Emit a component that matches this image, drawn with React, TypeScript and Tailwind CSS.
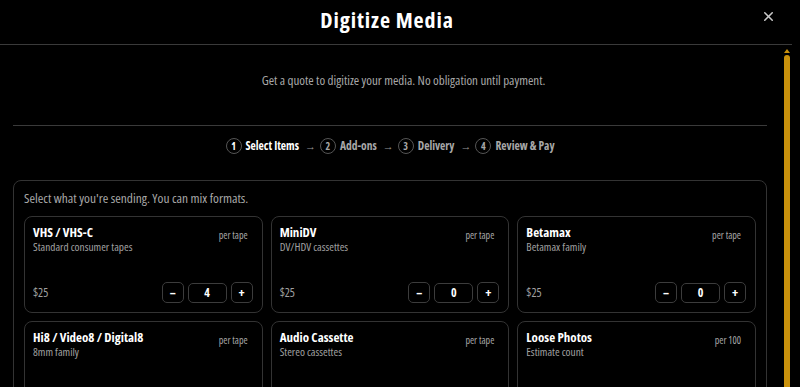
import React, { useState } from 'react';
import { X } from 'lucide-react';

interface MediaItem {
  id: string;
  name: string;
  desc: string;
  unit: string;
  price: number;
}

const ITEMS: MediaItem[] = [
  { id: 'vhs', name: 'VHS / VHS-C', desc: 'Standard consumer tapes', unit: 'per tape', price: 25 },
  { id: 'minidv', name: 'MiniDV', desc: 'DV/HDV cassettes', unit: 'per tape', price: 25 },
  { id: 'betamax', name: 'Betamax', desc: 'Betamax family', unit: 'per tape', price: 25 },
  { id: 'hi8', name: 'Hi8 / Video8 / Digital8', desc: '8mm family', unit: 'per tape', price: 25 },
  { id: 'audio', name: 'Audio Cassette', desc: 'Stereo cassettes', unit: 'per tape', price: 15 },
  { id: 'photos', name: 'Loose Photos', desc: 'Estimate count', unit: 'per 100', price: 30 },
];

const STEPS = ['Select Items', 'Add-ons', 'Delivery', 'Review & Pay'];

const App: React.FC = () => {
  const [qty, setQty] = useState<Record<string, number>>({ vhs: 4 });

  const change = (id: string, d: number) =>
    setQty(q => ({ ...q, [id]: Math.max(0, (q[id] || 0) + d) }));

  return (
    <div className="h-[387px] w-[800px] overflow-hidden bg-black font-['Open_Sans','Liberation_Sans',sans-serif] text-white [font-stretch:75%]">
      <div className="flex h-full w-[792px] flex-col">
        <header className="relative flex h-[45px] shrink-0 items-center justify-center border-b border-[#3a3a3a] pb-[6px] pr-[18px]">
          <h1 className="text-[22px] font-bold leading-[28px] tracking-[0.9px] text-white [font-stretch:87.5%]">
            Digitize Media
          </h1>
          <button className="absolute right-[16px] top-[9px] text-[#c8c8c8]">
            <X size={15} strokeWidth={2.5} />
          </button>
        </header>

        <div className="flex min-h-0 flex-1">
          <div className="min-w-0 flex-1 overflow-hidden">
            <div className="px-[13px] pb-[20px]">
              <p className="pl-[27px] pt-[26px] text-center text-[13px] leading-[18px] text-[#a8a8a8]">
                Get a quote to digitize your media. No obligation until payment.
              </p>
              <div className="mt-[36px] border-t border-[#3a3a3a]" />

              <div className="mt-[12px] flex items-center justify-center gap-[6px] text-[11.5px] font-bold leading-[16px]">
                {STEPS.map((s, i) => (
                  <React.Fragment key={s}>
                    {i > 0 && (
                      <span className="w-[9px] text-center text-[11px] font-normal text-[#9a9a9a]">→</span>
                    )}
                    <span className="flex items-center gap-[4px]">
                      <span
                        className={`flex h-[16px] w-[16px] items-center justify-center rounded-full border border-[#555] text-[10px] ${
                          i === 0 ? 'text-white' : 'text-[#a8a8a8]'
                        }`}
                      >
                        {i + 1}
                      </span>
                      <span className={i === 0 ? 'text-white' : 'text-[#a8a8a8]'}>{s}</span>
                    </span>
                  </React.Fragment>
                ))}
              </div>

              <section className="mt-[26px] rounded-[8px] border border-[#333] px-[10px] pb-[10px] pt-[9px]">
                <p className="mb-[10px] text-[13.4px] leading-[16px] text-[#a8a8a8]">
                  Select what you're sending. You can mix formats.
                </p>
                <div className="grid grid-cols-3 gap-[8px]">
                  {ITEMS.map(item => (
                    <div
                      key={item.id}
                      className="flex h-[97px] flex-col justify-between rounded-[8px] border border-[#333] px-[8px] pb-[9px] pt-[8px]"
                    >
                      <div className="flex items-start justify-between">
                        <div>
                          <div className="text-[13px] font-bold leading-[15px] text-white">{item.name}</div>
                          <div className="text-[11.3px] leading-[14px] text-[#a0a0a0]">{item.desc}</div>
                        </div>
                        <span className="mr-[6px] mt-[4px] text-[10px] leading-[12px] text-[#a8a8a8]">{item.unit}</span>
                      </div>
                      <div className="flex items-center justify-between">
                        <span className="text-[12px] text-[#a0a0a0]">${item.price}</span>
                        <div className="mr-[1px] flex items-center gap-[4px]">
                          <button
                            onClick={() => change(item.id, -1)}
                            className="flex h-[21px] w-[22px] items-center justify-center rounded-[5px] border border-[#3c3c3c] text-[12px] font-bold text-white"
                          >
                            –
                          </button>
                          <input
                            readOnly
                            value={qty[item.id] || 0}
                            className="h-[20px] w-[39px] rounded-[5px] border border-[#3c3c3c] bg-black text-center text-[12px] font-bold text-white outline-none"
                          />
                          <button
                            onClick={() => change(item.id, 1)}
                            className="flex h-[21px] w-[22px] items-center justify-center rounded-[5px] border border-[#3c3c3c] text-[13px] font-bold text-white"
                          >
                            +
                          </button>
                        </div>
                      </div>
                    </div>
                  ))}
                </div>
              </section>
            </div>
          </div>

          {/* scrollbar */}
          <div className="flex w-[12px] shrink-0 flex-col items-center pl-[1px] pt-[4px]">
            <div className="h-0 w-0 border-x-[3px] border-b-[4px] border-x-transparent border-b-[#c9910c]" />
            <div className="mt-[2px] w-[6px] flex-1 rounded-t-[3px] bg-[#c9910c]" />
          </div>
        </div>
      </div>
    </div>
  );
};

export default App;
